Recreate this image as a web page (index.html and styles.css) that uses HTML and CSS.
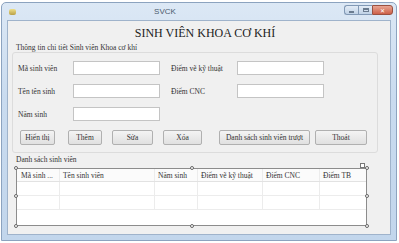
FILE: index.html
```html
<!DOCTYPE html>
<html lang="vi">
<head>
  <meta charset="UTF-8" />
  <title>SVCK</title>
  <link rel="stylesheet" href="styles.css">
</head>
<body>
  <div class="window">
    <div class="titlebar">
      <span class="app-icon"></span>
      <span class="caption">SVCK</span>
      <div class="win-buttons">
        <span class="wbtn wbtn-min"><i></i></span>
        <span class="wbtn wbtn-max"><i></i></span>
        <span class="wbtn wbtn-close">✕</span>
      </div>
    </div>

    <div class="client">
      <h1>SINH VIÊN KHOA CƠ KHÍ</h1>

      <div class="group-title">Thông tin chi tiết Sinh viên Khoa cơ khí</div>
      <div class="group-box">
        <div class="fields">
          <label>Mã sinh viên</label>
          <input type="text" />
          <label>Điểm vẽ kỹ thuật</label>
          <input type="text" />

          <label>Tên tên sinh</label>
          <input type="text" />
          <label>Điểm CNC</label>
          <input type="text" />

          <label>Năm sinh</label>
          <input type="text" />
        </div>

        <div class="action-buttons">
          <button class="btn-show">Hiển thị</button>
          <button class="btn-add">Thêm</button>
          <button class="btn-edit">Sửa</button>
          <button class="btn-del">Xóa</button>
          <button class="btn-fail">Danh sách sinh viên trượt</button>
          <button class="btn-exit">Thoát</button>
        </div>
      </div>

      <div class="list-title">Danh sách sinh viên</div>
      <div class="grid-wrap">
        <div class="grid">
          <div class="grid-row grid-head">
            <span class="c1">Mã sinh ...</span>
            <span class="c2">Tên sinh viên</span>
            <span class="c3">Năm sinh</span>
            <span class="c4">Điểm vẽ kỹ thuật</span>
            <span class="c5">Điểm CNC</span>
            <span class="c6">Điểm TB</span>
          </div>
          <div class="grid-row">
            <span class="c1"></span><span class="c2"></span><span class="c3"></span>
            <span class="c4"></span><span class="c5"></span><span class="c6"></span>
          </div>
          <div class="grid-row">
            <span class="c1"></span><span class="c2"></span><span class="c3"></span>
            <span class="c4"></span><span class="c5"></span><span class="c6"></span>
          </div>
        </div>

        <span class="handle h-tl"></span>
        <span class="handle h-tm"></span>
        <span class="handle h-tr"></span>
        <span class="handle h-ml"></span>
        <span class="handle h-mr"></span>
        <span class="handle h-bl"></span>
        <span class="handle h-bm"></span>
        <span class="handle h-br"></span>
        <span class="smart-tag"></span>
      </div>
    </div>
  </div>
</body>
</html>
```

FILE: styles.css
```css
* {
  box-sizing: border-box;
}

html, body {
  margin: 0;
  padding: 0;
  width: 399px;
  height: 243px;
  background: #fff;
  overflow: hidden;
  font-family: 'Liberation Serif', serif;
  color: #333;
}

.window {
  margin: 2px 0 0 1px;
  width: 396px;
  height: 239px;
  border: 1px solid #8ca3bf;
  border-radius: 5px 5px 0 0;
  background: linear-gradient(to bottom, #dce8f5 0%, #c9dbef 40%, #c2d6ec 100%);
  padding: 0 5px 5px;
  display: flex;
  flex-direction: column;
}

/* title bar */
.titlebar {
  height: 17px;
  display: flex;
  align-items: center;
}

.app-icon {
  width: 7px;
  height: 6px;
  margin-left: 2px;
  border-radius: 2px;
  background: linear-gradient(to bottom, #efe08a, #b9a048);
}

.caption {
  flex: 1;
  text-align: center;
  font-family: 'Liberation Sans', sans-serif;
  font-size: 8px;
  color: #4a5a6c;
  margin-left: -30px;
}

.win-buttons {
  display: flex;
  align-self: flex-start;
  margin-top: 2px;
  margin-right: -2px;
}

.wbtn {
  height: 10px;
  border: 1px solid #8299b5;
  display: flex;
  align-items: center;
  justify-content: center;
  background: linear-gradient(to bottom, #e3ecf6, #c0d2e6);
}

.wbtn-min {
  width: 14px;
  border-radius: 3px 0 0 3px;
  border-right: none;
}

.wbtn-min i {
  width: 5px;
  height: 2px;
  margin-top: 3px;
  background: #6b7c90;
}

.wbtn-max {
  width: 14px;
  border-right: none;
}

.wbtn-max i {
  width: 6px;
  height: 4px;
  border: 1px solid #6b7c90;
  border-top-width: 2px;
}

.wbtn-close {
  width: 21px;
  border-radius: 0 3px 3px 0;
  border-color: #9a5040;
  background: linear-gradient(to bottom, #e8a593, #cd6048);
  color: #fff;
  font-family: 'DejaVu Sans', sans-serif;
  font-size: 6px;
  font-weight: bold;
}

/* client area */
.client {
  flex: 1;
  background: #f0f0f0;
  border: 1px solid #9fb3cb;
}

h1 {
  margin: 5px 0 0;
  padding-left: 12px;
  font-size: 12px;
  line-height: 15px;
  font-weight: normal;
  text-align: center;
  color: #222;
}

.group-title {
  margin: 2px 0 0 8px;
  font-size: 7.5px;
  line-height: 9px;
}

.group-box {
  margin: 0 0 0 4px;
  width: 366px;
  border: 1px solid #dcdcdc;
  border-radius: 3px;
  padding: 8px 0 7px 5px;
}

.fields {
  display: grid;
  grid-template-columns: 55px 98px 66px 87px;
  grid-auto-rows: 14px;
  row-gap: 9px;
  align-items: center;
  font-size: 7.5px;
}

.fields input[type="text"] {
  width: 87px;
  height: 14px;
  margin: 0;
  padding: 0;
  border: 1px solid #c4c4c4;
  background: #fff;
}

.action-buttons {
  display: flex;
  margin-top: 9px;
  margin-left: 2px;
}

button {
  height: 15px;
  padding: 0;
  border: 1px solid #b0b0b0;
  border-radius: 2px;
  background: linear-gradient(to bottom, #f4f4f4, #e0e0e0);
  font-family: 'Liberation Serif', serif;
  font-size: 7.5px;
  color: #333;
}

.btn-show { width: 35px; }
.btn-add  { width: 34px; margin-left: 13px; }
.btn-edit { width: 41px; margin-left: 10px; }
.btn-del  { width: 39px; margin-left: 10px; }
.btn-fail { width: 91px; margin-left: 17px; }
.btn-exit { width: 52px; margin-left: 5px; }

.list-title {
  margin: 2px 0 0 8px;
  font-size: 7.5px;
  line-height: 9px;
}

/* data grid (selected in designer) */
.grid-wrap {
  position: relative;
  margin: 4px 0 0 8px;
  width: 351px;
  height: 58px;
}

.grid {
  width: 100%;
  height: 100%;
  border: 1px solid #8c8c8c;
  background: #fff;
}

.grid-row {
  display: flex;
  height: 14px;
  border-bottom: 1px solid #ececec;
  font-size: 7.5px;
  line-height: 13px;
}

.grid-head {
  height: 13px;
  background: #fbfbfb;
  border-bottom-color: #e2e2e2;
}

.grid-row span {
  padding-left: 3px;
  border-right: 1px solid #ececec;
  white-space: nowrap;
  overflow: hidden;
}

.grid-row .c1 { width: 43px; padding-left: 4px; }
.grid-row .c2 { width: 95px; }
.grid-row .c3 { width: 43px; }
.grid-row .c4 { width: 65px; }
.grid-row .c5 { width: 57px; }
.grid-row .c6 { flex: 1; border-right: none; }

.handle {
  position: absolute;
  width: 4px;
  height: 4px;
  border: 1px solid #666;
  border-radius: 50%;
  background: #fff;
}

.h-tl { left: -2px; top: -2px; }
.h-tm { left: 174px; top: -2px; }
.h-tr { right: -2px; top: -2px; }
.h-ml { left: -2px; top: 26px; }
.h-mr { right: -2px; top: 26px; }
.h-bl { left: -2px; bottom: -2px; }
.h-bm { left: 174px; bottom: -2px; }
.h-br { right: -2px; bottom: -2px; }

.smart-tag {
  position: absolute;
  right: 2px;
  top: -5px;
  width: 5px;
  height: 5px;
  border: 1px solid #777;
  background: #fff;
}
```
